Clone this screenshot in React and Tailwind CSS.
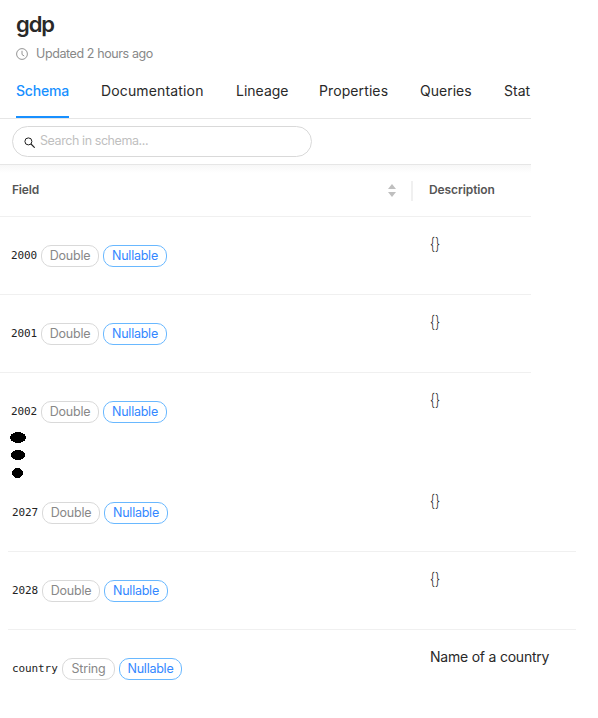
const tabs = [
  { label: 'Schema', box: 'w-[53px] mr-8', text: 'tracking-[-0.2px]', active: true },
  { label: 'Documentation', box: 'w-[103px] mr-8', text: 'tracking-[0.15px]' },
  { label: 'Lineage', box: 'w-[51px] mr-8', text: 'tracking-[0px]' },
  { label: 'Properties', box: 'w-[69px] mr-8', text: 'tracking-[0.1px]' },
  { label: 'Queries', box: 'w-[52px] mr-8', text: 'tracking-[0px]' },
  { label: 'Stat', box: 'w-[29px]', text: 'tracking-[0px]' },
];

function Field({ name, type }) {
  const wide = type === 'String';
  return (
    <div className="flex items-center gap-1 whitespace-nowrap">
      <span className={`${wide ? 'w-[46px]' : 'w-[26px]'} shrink-0 font-['DejaVu_Sans_Mono',monospace] text-[11px] leading-4 tracking-[-0.1px] text-[#222]`}>{name}</span>
      <span className={`${wide ? 'w-[53px]' : 'w-[58px]'} flex h-[22px] shrink-0 items-center justify-center rounded-[10px] border border-[#d9d9d9] text-[12.5px] tracking-[-0.2px] text-[#888]`}>{type}</span>
      <span className={`${wide ? 'w-[63px]' : 'w-[64px]'} flex h-[22px] shrink-0 items-center justify-center rounded-[10px] border border-[#69b8ff] text-[12.5px] tracking-[-0.25px] text-[#3387ff]`}>Nullable</span>
    </div>
  );
}

function Row({ name, type = 'Double', children, last, inset }) {
  return (
    <div className={`flex h-[78px] shrink-0 ${inset ? 'ml-2 w-[568px] pl-1' : 'w-[531px] pl-[11px]'} ${last ? '' : 'border-b border-[#f0f0f0]'}`}>
      <div className={`${inset ? 'w-[418px]' : 'w-[419px]'} shrink-0 pt-7`}>
        <Field name={name} type={type} />
      </div>
      <div className="pt-4 text-[14px] leading-[22px] tracking-[-0.22px] whitespace-nowrap text-[#292929]">{children}</div>
    </div>
  );
}

function Braces() {
  return <span className="block w-[10px] origin-left scale-x-[0.72] text-[17px] font-light tracking-[0px]">{'{}'}</span>;
}

export default function App() {
  return (
    <main className="flex h-[718px] w-[598px] flex-col overflow-hidden bg-white font-['Inter',sans-serif] text-[#292929]">
      <header className="h-[64px] shrink-0 px-4 pt-2">
        <h1 className="h-8 text-[22px] leading-8 font-semibold tracking-[-1.1px] text-[#292929]">gdp</h1>
        <div className="mt-[3px] flex h-[22px] items-center gap-2 text-[12.5px] tracking-[-0.4px] text-[#888]">
          <svg className="h-3 w-3" viewBox="0 0 12 12" fill="none" stroke="currentColor">
            <circle cx="6" cy="6" r="5.4" strokeWidth="0.9" />
            <path d="M6 2.8v3.7l2.2 1.5" strokeWidth="0.9" />
          </svg>
          <span>Updated 2 hours ago</span>
        </div>
      </header>
      <nav className="flex h-[55px] w-[531px] shrink-0 overflow-hidden border-b border-[#e6e6e6] pl-4 text-[14px]">
        {tabs.map((t) => (
          <div key={t.label} className={`${t.box} shrink-0 pt-4 leading-[22px] whitespace-nowrap ${t.active ? 'border-b-2 border-[#1890ff] font-medium text-[#1890ff]' : ''}`}>
            <span className={t.text}>{t.label}</span>
          </div>
        ))}
      </nav>
      <div className="h-[46px] w-[531px] shrink-0 border-b border-[#e6e6e6] pt-[7px] pl-3">
        <div className="flex h-[31px] w-[300px] items-center rounded-full border border-[#d9d9d9] pl-[11px]">
          <svg className="mt-0.5 mr-[5px] h-[11px] w-[11px] text-[#222]" viewBox="0 0 11 11" fill="none" stroke="currentColor">
            <circle cx="4.4" cy="4.4" r="3.5" strokeWidth="1" />
            <path d="M7 7 10.7 10.7" strokeWidth="1.1" />
          </svg>
          <span className="text-[12.5px] tracking-[-0.42px] text-[#bfbfbf]">Search in schema...</span>
        </div>
      </div>
      <div className="flex h-[52px] w-[531px] shrink-0 items-center border-b border-[#f0f0f0] bg-linear-to-b from-[#f7f7f7] to-white to-[8px] pl-3 text-[12px] font-semibold tracking-[-0.2px] text-[#555]">
        <span className="w-[376px] pb-0.5">Field</span>
        <svg className="h-[13px] w-2 text-[#bfbfbf]" viewBox="0 0 8 13" fill="currentColor">
          <path d="M4 0 8 5H0ZM0 8h8L4 13Z" />
        </svg>
        <span className="ml-[15px] h-5 w-0.5 bg-[#f0f0f0]" />
        <span className="ml-4 pb-0.5 tracking-[-0.1px]">Description</span>
      </div>
      <Row name="2000"><Braces /></Row>
      <Row name="2001"><Braces /></Row>
      <Row name="2002" last><Braces /></Row>
      <div className="-mt-[20px] flex h-[48px] w-9 shrink-0 flex-col items-center">
        <svg className="h-12 w-9" viewBox="0 0 36 48" shapeRendering="crispEdges">
          <ellipse cx="18" cy="6.5" rx="8" ry="5.5" />
          <ellipse cx="18" cy="24" rx="7" ry="5" />
          <ellipse cx="17.5" cy="42" rx="5.5" ry="5" />
        </svg>
      </div>
      <div className="-mt-[5px] flex flex-col">
        <Row name="2027" inset><Braces /></Row>
        <Row name="2028" inset><Braces /></Row>
        <Row name="country" type="String" inset last>Name of a country</Row>
      </div>
    </main>
  );
}
